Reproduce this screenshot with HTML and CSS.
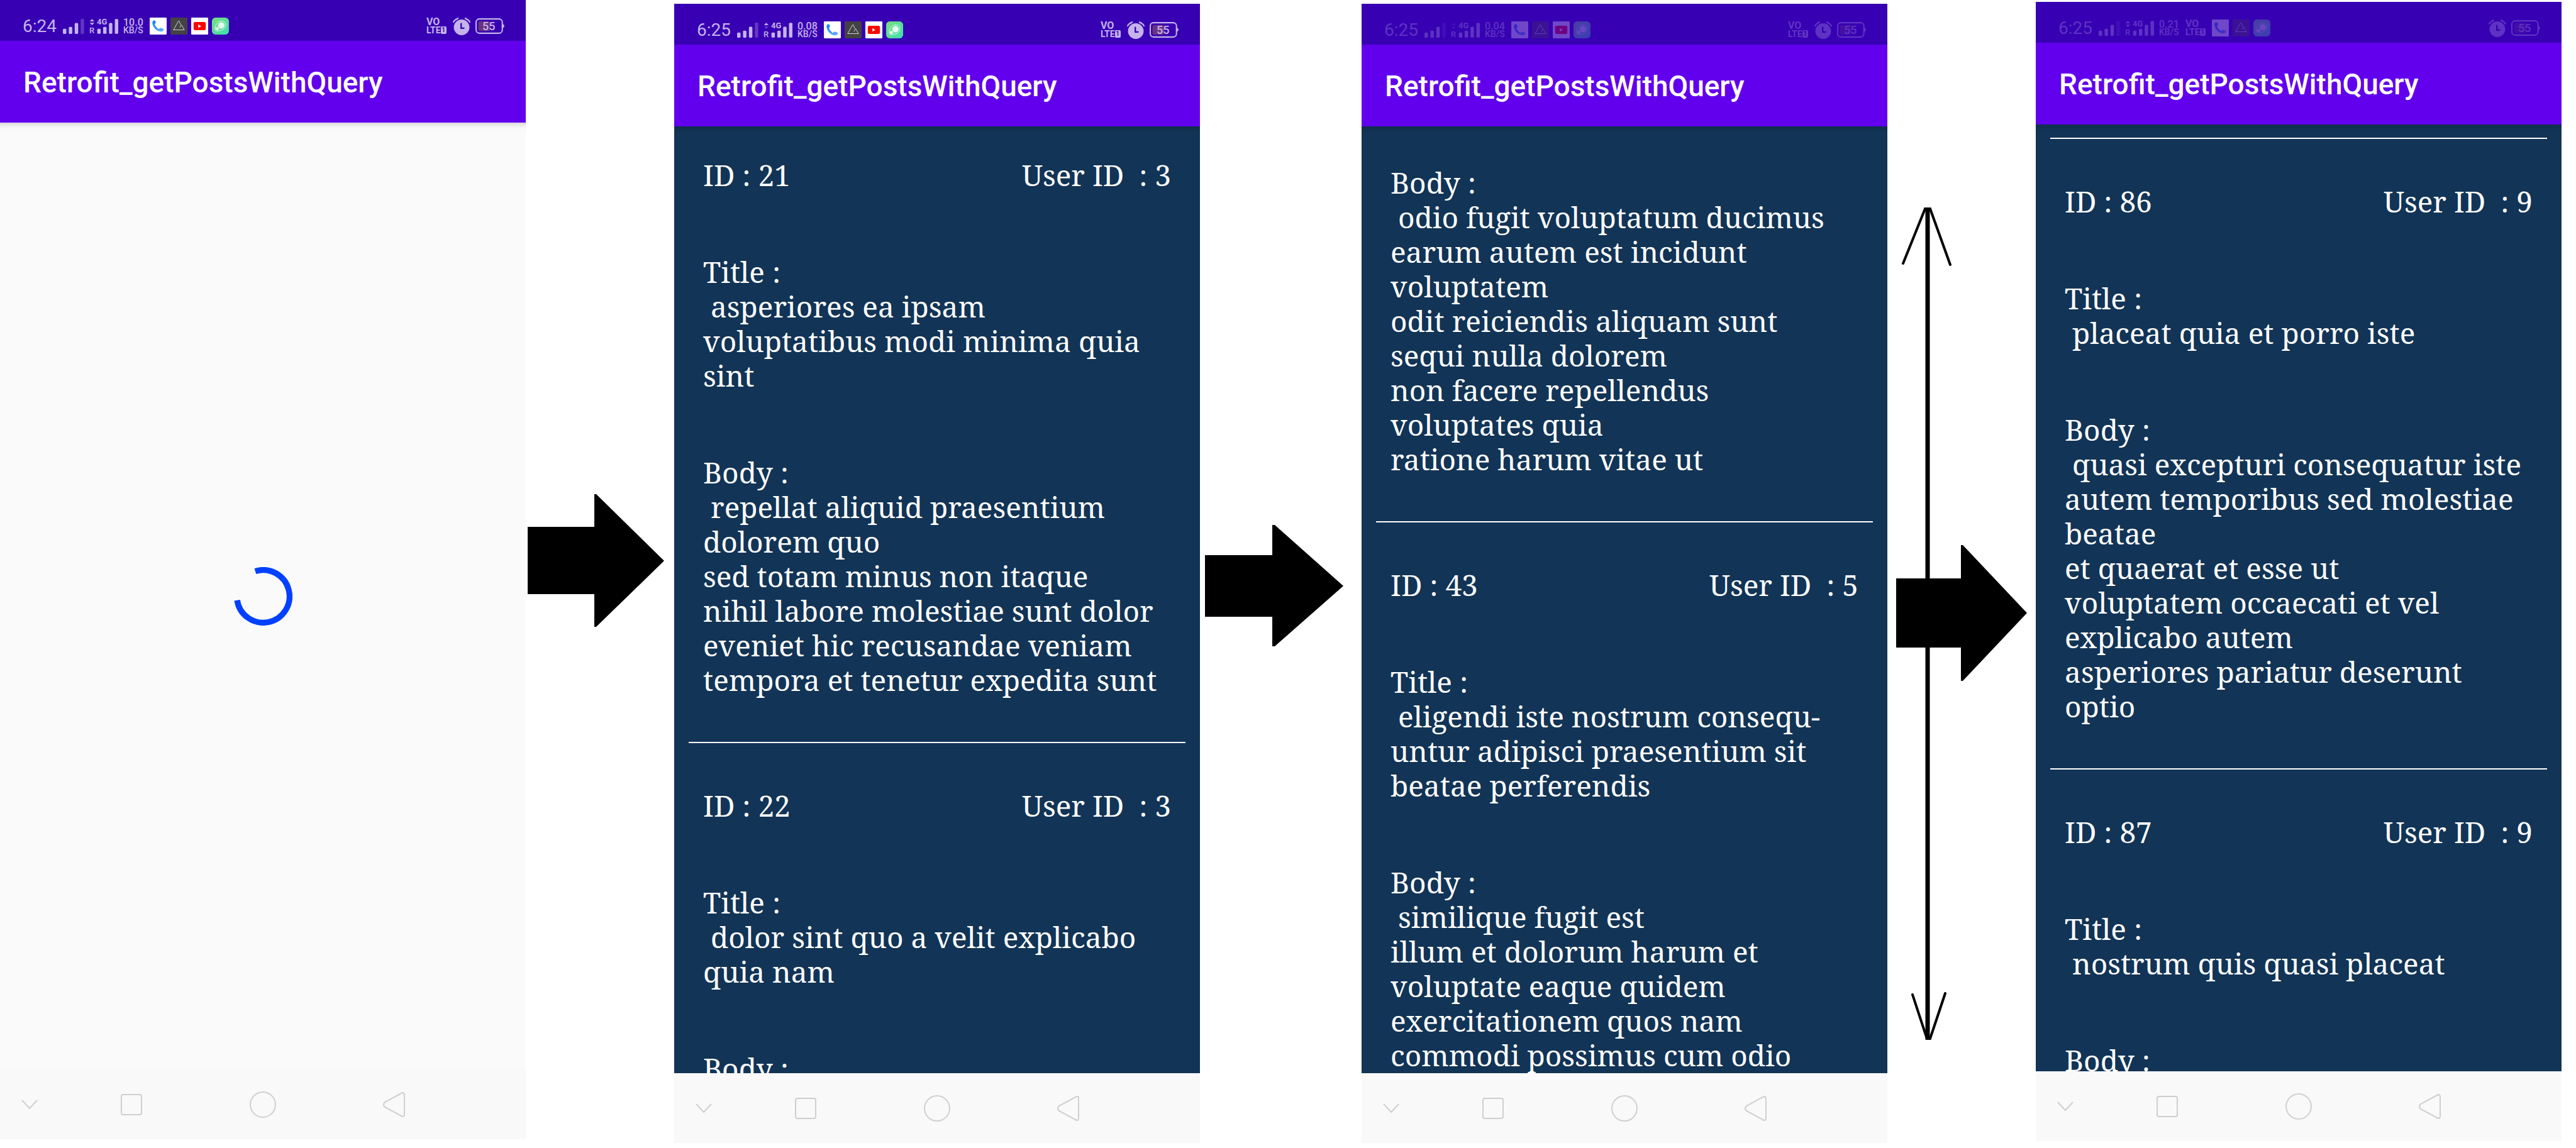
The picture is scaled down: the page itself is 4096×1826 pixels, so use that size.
FILE: index.html
```html
<!DOCTYPE html>
<html lang="en">
<head>
<meta charset="utf-8">
<meta name="viewport" content="width=device-width, initial-scale=1">
<title>Retrofit_getPostsWithQuery</title>
<link rel="stylesheet" href="styles.css">
</head>
<body>
<svg class="sprite" aria-hidden="true">
  <defs>
    <linearGradient id="greenFill" x1="0" y1="0" x2="1" y2="1"><stop offset="0" stop-color="#78df7c"/><stop offset="1" stop-color="#3fdcb4"/></linearGradient>
    <linearGradient id="blueFill" x1="0" y1="0" x2="1" y2="1"><stop offset="0" stop-color="#0f78ff"/><stop offset="1" stop-color="#6fb2ff"/></linearGradient>
  </defs>
  <symbol id="signal" viewBox="0 0 130 91">
    <rect x="0" y="60" width="21" height="31" rx="6"/><rect x="36" y="48" width="21" height="43" rx="6"/><rect x="72" y="24" width="21" height="67" rx="6"/><rect x="108" y="0" width="21" height="91" rx="6" opacity=".3"/>
  </symbol>
  <symbol id="bars" viewBox="0 0 178 91">
    <rect x="49" y="60" width="21" height="31" rx="6"/><rect x="85" y="48" width="21" height="43" rx="6"/><rect x="121" y="24" width="21" height="67" rx="6"/><rect x="157" y="0" width="21" height="91" rx="6"/>
  </symbol>
  <symbol id="up" viewBox="0 0 178 91"><path d="M3 15 17 0l14 15z"/></symbol>
  <symbol id="down" viewBox="0 0 178 91"><path d="M3 23 17 38l14-15z"/></symbol>
  <symbol id="call" viewBox="0 0 105 105">
    <rect width="105" height="105" rx="5" fill="#fff"/>
    <path d="M22 19c8-4 13 0 15 7 2 8-3 12-6 16 4 11 14 22 25 29 6-6 12-8 18-6 8 2 13 5 13 11-1 6-8 11-16 11C43 85 20 61 17 34c0-7 1-12 5-15z" fill="url(#blueFill)"/>
  </symbol>
  <symbol id="peak" viewBox="0 0 105 105">
    <rect width="105" height="105" rx="5" fill="#434343"/>
    <path d="M58 62 68 45 86 76H19L49 22q3-3 5 0L63 44" fill="none" stroke="#fff" stroke-width="3"/>
  </symbol>
  <symbol id="play" viewBox="0 0 105 105">
    <rect width="105" height="105" rx="5" fill="#fff"/><rect x="15" y="27" width="75" height="51" rx="9" fill="#f00"/><path d="M44 42v21l18-10z" fill="#fff"/>
  </symbol>
  <symbol id="leaf" viewBox="0 0 105 105">
    <rect width="105" height="105" rx="22" fill="url(#greenFill)"/>
    <path d="M20 58C25 38 36 25 53 22c17-3 32 7 32 22 0 18-12 32-28 34-12 1-16 7-25 5-11-2-15-14-12-25z" fill="none" stroke="#fff" stroke-width="3"/>
    <circle cx="58" cy="48" r="20" fill="#e6fbef"/><circle cx="33" cy="68" r="10" fill="#e6fbef"/>
  </symbol>
  <symbol id="alarm" viewBox="0 0 108 108">
    <circle cx="54" cy="60" r="48"/><path d="M4 27Q14 11 31 5M104 27Q94 11 77 5" fill="none" stroke="currentColor" stroke-width="9" stroke-linecap="round"/>
    <path d="M51 37v28h17" fill="none" stroke="#3700b3" stroke-width="9" stroke-linecap="round"/>
  </symbol>
  <symbol id="battery" viewBox="0 0 180 97">
    <rect x="4" y="4" width="163" height="89" rx="20" fill="none" stroke="currentColor" stroke-width="8"/><path d="M168 35q12 5 12 13t-12 13z"/>
    <rect x="18" y="18" width="72" height="61" rx="10" fill="#6a3380"/>
  </symbol>
  <symbol id="hide" viewBox="0 0 26 16"><path d="M1 1l12 13L25 1"/></symbol>
  <symbol id="recent" viewBox="0 0 34 34"><rect x="1" y="1" width="32" height="32" rx="3"/></symbol>
  <symbol id="home" viewBox="0 0 42 42"><circle cx="21" cy="21" r="20"/></symbol>
  <symbol id="back" viewBox="0 0 36 42"><path d="M31 2 3 17q-4 4 0 8l28 15q3 0 3-4V6q0-4-3-4z"/></symbol>
</svg>

<main class="flow">
  <section class="phone">
    <div class="status">
      <span class="time">6:24</span>
      <svg class="signal"><use href="#signal"/></svg>
      <span class="bars"><svg><use href="#bars"/><use href="#up"/><use href="#down"/></svg><span class="net">4G</span><span class="roam">R</span></span>
      <span class="speed">10.0<small>KB/S</small></span>
      <div class="apps"><svg><use href="#call"/></svg><svg><use href="#peak"/></svg><svg><use href="#play"/></svg><svg><use href="#leaf"/></svg></div>
      <span class="volte push">VO<span class="lte">LTE<span class="sim">1</span></span></span>
      <svg class="alarm"><use href="#alarm"/></svg>
      <span class="battery"><svg><use href="#battery"/></svg><span class="level">55</span></span>
    </div>
    <header class="appbar"><h1>Retrofit_getPostsWithQuery</h1></header>
    <div class="screen loading">
      <svg class="spinner" viewBox="0 0 120 120" role="img" aria-label="Loading"><path d="M43.8 8.5A54 54 0 1 1 6.6 68" fill="none" stroke="#0040ff" stroke-width="12"/></svg>
    </div>
    <nav class="nav">
      <button class="hide" aria-label="Hide"><svg><use href="#hide"/></svg></button>
      <button class="recent" aria-label="Recent"><svg><use href="#recent"/></svg></button>
      <button class="home" aria-label="Home"><svg><use href="#home"/></svg></button>
      <button class="back" aria-label="Back"><svg><use href="#back"/></svg></button>
    </nav>
  </section>

  <svg class="arrow" viewBox="0 0 236 1826" aria-hidden="true"><path d="M3 838h106v-52h3l108 106-108 105h-3v-52H3z"/></svg>

  <section class="phone low">
    <div class="status">
      <span class="time">6:25</span>
      <svg class="signal"><use href="#signal"/></svg>
      <span class="bars"><svg><use href="#bars"/><use href="#up"/><use class="faint" href="#down"/></svg><span class="net">4G</span><span class="roam">R</span></span>
      <span class="speed">0.08<small>KB/S</small></span>
      <div class="apps"><svg><use href="#call"/></svg><svg><use href="#peak"/></svg><svg><use href="#play"/></svg><svg><use href="#leaf"/></svg></div>
      <span class="volte push">VO<span class="lte">LTE<span class="sim">1</span></span></span>
      <svg class="alarm"><use href="#alarm"/></svg>
      <span class="battery"><svg><use href="#battery"/></svg><span class="level">55</span></span>
    </div>
    <header class="appbar"><h1>Retrofit_getPostsWithQuery</h1></header>
    <div class="screen feed at-id">
      <article class="post">
        <div class="ids"><span>ID : 21</span><span>User ID  : 3</span></div>
        <p>Title :
 asperiores ea ipsam
voluptatibus modi minima quia
sint</p>
        <p>Body :
 repellat aliquid praesentium
dolorem quo
sed totam minus non itaque
nihil labore molestiae sunt dolor
eveniet hic recusandae veniam
tempora et tenetur expedita sunt</p>
      </article>
      <article class="post">
        <div class="ids"><span>ID : 22</span><span>User ID  : 3</span></div>
        <p>Title :
 dolor sint quo a velit explicabo
quia nam</p>
        <p>Body :</p>
      </article>
    </div>
    <nav class="nav">
      <button class="hide" aria-label="Hide"><svg><use href="#hide"/></svg></button>
      <button class="recent" aria-label="Recent"><svg><use href="#recent"/></svg></button>
      <button class="home" aria-label="Home"><svg><use href="#home"/></svg></button>
      <button class="back" aria-label="Back"><svg><use href="#back"/></svg></button>
    </nav>
  </section>

  <svg class="arrow" viewBox="0 0 257 1826" aria-hidden="true"><path d="M8 883h107v-48h4l109 97-109 96h-4v-47H8z"/></svg>

  <section class="phone low dim">
    <div class="status">
      <span class="time">6:25</span>
      <svg class="signal"><use href="#signal"/></svg>
      <span class="bars"><svg><use href="#bars"/><use class="faint" href="#up"/><use class="faint" href="#down"/></svg><span class="net">4G</span><span class="roam">R</span></span>
      <span class="speed">0.04<small>KB/S</small></span>
      <div class="apps"><svg><use href="#call"/></svg><svg><use href="#peak"/></svg><svg><use href="#play"/></svg><svg><use href="#leaf"/></svg></div>
      <span class="volte push">VO<span class="lte">LTE<span class="sim">1</span></span></span>
      <svg class="alarm"><use href="#alarm"/></svg>
      <span class="battery"><svg><use href="#battery"/></svg><span class="level">55</span></span>
    </div>
    <header class="appbar"><h1>Retrofit_getPostsWithQuery</h1></header>
    <div class="screen feed at-body">
      <article class="post">
        <p>Body :
 odio fugit voluptatum ducimus
earum autem est incidunt
voluptatem
odit reiciendis aliquam sunt
sequi nulla dolorem
non facere repellendus
voluptates quia
ratione harum vitae ut</p>
      </article>
      <article class="post">
        <div class="ids"><span>ID : 43</span><span>User ID  : 5</span></div>
        <p>Title :
 eligendi iste nostrum consequ-
untur adipisci praesentium sit
beatae perferendis</p>
        <p>Body :
 similique fugit est
illum et dolorum harum et
voluptate eaque quidem
exercitationem quos nam
commodi possimus cum odio</p>
      </article>
    </div>
    <nav class="nav">
      <button class="hide" aria-label="Hide"><svg><use href="#hide"/></svg></button>
      <button class="recent" aria-label="Recent"><svg><use href="#recent"/></svg></button>
      <button class="home" aria-label="Home"><svg><use href="#home"/></svg></button>
      <button class="back" aria-label="Back"><svg><use href="#back"/></svg></button>
    </nav>
  </section>

  <svg class="arrow" viewBox="0 0 236 1826" aria-hidden="true">
    <path d="M14 920h103v-53h3l102 108-102 108h-3v-53H14z"/>
    <path d="M64 331v1323" fill="none" stroke="#000" stroke-width="7"/>
    <path d="M25 419 60 332h8l32 89M40 1582l23 70h5l24-72" fill="none" stroke="#000" stroke-width="4" stroke-linecap="round"/>
  </svg>

  <section class="phone mid dim">
    <div class="status">
      <span class="time">6:25</span>
      <svg class="signal"><use href="#signal"/></svg>
      <span class="bars"><svg><use href="#bars"/><use href="#up"/><use href="#down"/></svg><span class="net">4G</span><span class="roam">R</span></span>
      <span class="speed">0.21<small>KB/S</small></span>
      <span class="volte">VO<span class="lte">LTE<span class="sim">1</span></span></span>
      <div class="apps"><svg><use href="#call"/></svg><svg><use href="#peak"/></svg><svg><use href="#leaf"/></svg></div>
      <svg class="alarm push"><use href="#alarm"/></svg>
      <span class="battery"><svg><use href="#battery"/></svg><span class="level">55</span></span>
    </div>
    <header class="appbar"><h1>Retrofit_getPostsWithQuery</h1></header>
    <div class="screen feed at-rule">
      <article class="post">
        <div class="ids"><span>ID : 86</span><span>User ID  : 9</span></div>
        <p>Title :
 placeat quia et porro iste</p>
        <p>Body :
 quasi excepturi consequatur iste
autem temporibus sed molestiae
beatae
et quaerat et esse ut
voluptatem occaecati et vel
explicabo autem
asperiores pariatur deserunt
optio</p>
      </article>
      <article class="post">
        <div class="ids"><span>ID : 87</span><span>User ID  : 9</span></div>
        <p>Title :
 nostrum quis quasi placeat</p>
        <p>Body :</p>
      </article>
    </div>
    <nav class="nav">
      <button class="hide" aria-label="Hide"><svg><use href="#hide"/></svg></button>
      <button class="recent" aria-label="Recent"><svg><use href="#recent"/></svg></button>
      <button class="home" aria-label="Home"><svg><use href="#home"/></svg></button>
      <button class="back" aria-label="Back"><svg><use href="#back"/></svg></button>
    </nav>
  </section>
</main>
</body>
</html>
```
FILE: styles.css
```css
* { box-sizing: border-box; }
body { margin: 0; background: #fff; font-family: Roboto, "Liberation Sans", sans-serif; }
.sprite { position: absolute; width: 0; height: 0; }

.flow {
  display: grid;
  grid-template-columns: 836fr 236fr 836fr 257fr 836fr 236fr 836fr 23fr;
  align-items: start;
  height: 100vh;
  overflow: hidden;
}
.arrow { display: block; width: 100%; }

.phone { display: flex; flex-direction: column; min-width: 0; height: calc(100vh - 14px); }
.phone.low { margin-top: 6px; }
.phone.mid { margin-top: 3px; }

.status {
  flex: none;
  display: flex;
  align-items: center;
  gap: 8px;
  height: 65px;
  padding: 18px 34px 0 36px;
  background: #3700b3;
  color: #c5b4ec;
}
.status svg { flex: none; display: block; fill: currentColor; }
.dim .status > * { opacity: .28; }
.time { min-width: 56px; font-size: 28px; line-height: 32px; }
.signal { width: 34px; height: 24px; }
.bars, .bars svg { width: 46px; height: 24px; }
.bars, .battery { position: relative; }
.net, .roam { position: absolute; font-size: 13px; line-height: 10px; }
.net { left: 12px; top: 0; font-weight: 700; }
.roam { left: 0; bottom: 0; font-weight: 500; }
.faint { opacity: .35; }
.speed { width: 34px; font-size: 16px; line-height: 13px; font-weight: 500; }
.speed small { display: block; font-size: 14px; }
.apps { display: flex; gap: 6px; }
.apps svg { width: 27px; height: 27px; }
.volte { width: 34px; font-size: 16px; line-height: 13px; font-weight: 700; }
.lte { display: flex; align-items: center; font-size: 14px; line-height: 14px; }
.sim { width: 9px; border-radius: 2px; background: #c5b4ec; color: #3700b3; font-size: 10px; line-height: 12px; text-align: center; }
.alarm { width: 28px; height: 28px; }
.battery, .battery svg { width: 46px; height: 25px; }
.level { position: absolute; left: 11px; top: 0; font-size: 18px; line-height: 26px; font-weight: 500; }
.status .push { margin-left: auto; }

.appbar {
  flex: none;
  display: flex;
  align-items: center;
  height: 130px;
  padding: 2px 37px 0;
  background: #6200ee;
  color: #fff;
}
.appbar h1 { margin: 0; font-size: 46px; line-height: 56px; font-weight: 500; }

.screen { flex: 1; min-height: 0; overflow: hidden; box-shadow: inset 0 10px 10px -8px rgba(0, 0, 0, .2); }
.loading { display: flex; align-items: center; justify-content: center; background: #fafafa; }
.spinner { width: 93px; height: 93px; }

.feed {
  padding: 0 23px;
  background-color: #123456;
  color: #fff;
  font-family: "Noto Serif", "Liberation Serif", serif;
  font-size: 46px;
  line-height: 55px;
}
.at-id { padding-top: 50px; }
.at-body { padding-top: 62px; }
.at-rule { padding-top: 21px; }
.post { padding: 0 23px 71px; }
.post + .post, .at-rule .post { padding-top: 72px; border-top: 2px solid #fff; }
.post p, .ids { margin: 0; white-space: pre; }
.post p:not(:first-child) { margin-top: 99px; }
.ids { display: flex; justify-content: space-between; }

.nav {
  flex: none;
  display: grid;
  grid-template-columns: 1fr 2fr 2fr 2fr 1fr;
  align-items: center;
  height: 111px;
  background: #f9f9f9;
}
.nav button { display: flex; justify-content: center; padding: 0; border: 0; background: none; }
.nav .hide { justify-content: flex-start; padding-left: 34px; }
.nav svg { display: block; fill: none; stroke: #cfcfcf; stroke-width: 2px; }
.hide svg { width: 26px; height: 16px; }
.recent svg { width: 34px; height: 34px; }
.home svg { width: 42px; height: 42px; }
.back svg { width: 36px; height: 42px; }
```
